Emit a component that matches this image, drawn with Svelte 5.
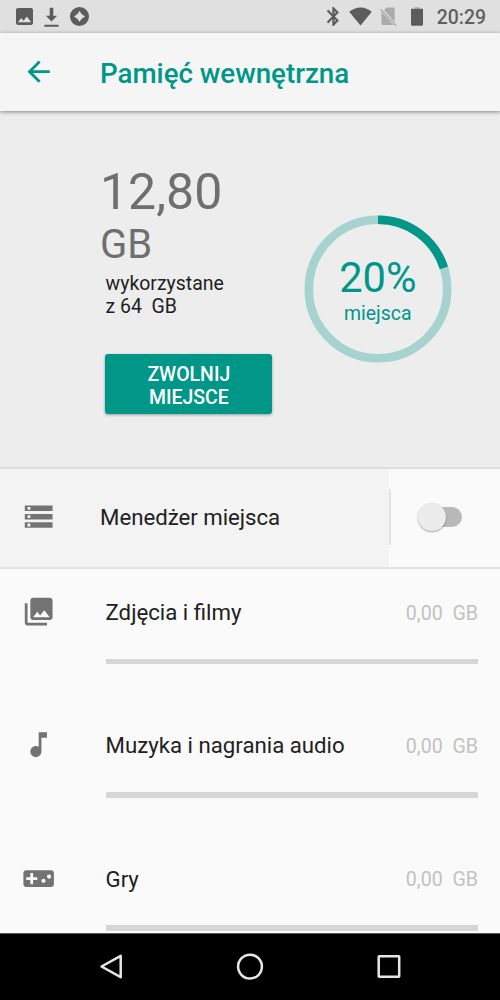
<script>
  const usedPercent = 20;
  const radius = 69.2;
  const circumference = 2 * Math.PI * radius;

  const categories = [
    {
      name: 'Zdjęcia i filmy',
      size: '0,00  GB',
      icon: 'M22 16V4c0-1.1-.9-2-2-2H8c-1.1 0-2 .9-2 2v12c0 1.1.9 2 2 2h12c1.1 0 2-.9 2-2zm-11-4l2.03 2.71L16 11l4 5H8l3-4zM2 6v14c0 1.1.9 2 2 2h14v-2H4V6H2z'
    },
    {
      name: 'Muzyka i nagrania audio',
      size: '0,00  GB',
      icon: 'M12 3v10.55c-.59-.34-1.27-.55-2-.55-2.21 0-4 1.79-4 4s1.79 4 4 4 4-1.79 4-4V7h4V3h-6z'
    },
    {
      name: 'Gry',
      size: '0,00  GB',
      icon: 'M21 6H3c-1.1 0-2 .9-2 2v8c0 1.1.9 2 2 2h18c1.1 0 2-.9 2-2V8c0-1.1-.9-2-2-2zm-10 7H8v3H6v-3H3v-2h3V8h2v3h3v2zm4.5 2c-.83 0-1.5-.67-1.5-1.5s.67-1.5 1.5-1.5 1.5.67 1.5 1.5-.67 1.5-1.5 1.5zm4-3c-.83 0-1.5-.67-1.5-1.5S18.67 9 19.5 9s1.5.67 1.5 1.5-.67 1.5-1.5 1.5z'
    }
  ];
</script>

<div class="screen">
  <div class="status">
    <div class="notifications">
      <svg width="17" height="17" viewBox="3 3 18 18"><path d="M21 19V5c0-1.100-.9-2-2-2H5c-1.100 0-2 .9-2 2v14c0 1.100.9 2 2 2h14c1.100 0 2-.9 2-2zM8.500 13.500l2.500 3.010L14.500 12l4.500 6H5l3.500-4.500z" /></svg>
      <svg width="15" height="20" viewBox="0 0 15 20"><path d="M5.700.8h3.600v8h3.900L7.500 14.500 1.800 8.800h3.900zM.3 17.800h14.300v1.900H.3z" /></svg>
      <svg width="19" height="19" viewBox="0 0 19 19"><path fill-rule="evenodd" d="M9.500 0a9.500 9.500 0 1 0 0 19a9.500 9.500 0 1 0 0-19zM9.500 4Q11.300 7.700 15 9.500Q11.300 11.300 9.500 15Q7.700 11.300 4 9.500Q7.700 7.700 9.500 4z" /></svg>
    </div>
    <div class="indicators">
      <svg width="12" height="19" viewBox="5 2 13 20" preserveAspectRatio="none"><path stroke="#5c5c5c" stroke-width=".4" d="M17.710 7.710L12 2h-1v7.590L6.410 5 5 6.410 10.590 12 5 17.590 6.410 19 11 14.410V22h1l5.710-5.710-4.300-4.290 4.300-4.290zM13 5.830l1.880 1.880L13 9.590V5.830zm1.880 10.460L13 18.170v-3.760l1.880 1.880z" /></svg>
      <svg class="wifi" width="23" height="19" viewBox="0 0 23 19"><path d="M11.500 18.500L.2 4.800C3.500 2 7.300.4 11.500.4s8 1.600 11.300 4.400z" /></svg>
      <svg class="sim" width="17" height="19" viewBox="0 0 17 19"><path d="M6.500.6H13c1 0 1.700.7 1.700 1.700v12.700L4.100 3.300zM1.500 5L13.500 17.900H3.200c-1 0-1.700-.7-1.700-1.700z" /><path d="M.4 2.200l15.500 16.200" fill="none" stroke="#aaa" stroke-width="1.500" /></svg>
      <svg class="battery" width="12" height="19" viewBox="0 0 12 19"><path d="M3.500 0h5v2h-5z" fill="#b5b5b5" /><path d="M0 1.800h12V17.600q0 1.100-1.100 1.100H1.100Q0 18.700 0 17.600z" /></svg>
      <span class="clock">20:29</span>
    </div>
  </div>

  <header>
    <svg class="icon back" viewBox="0 0 24 24"><path d="M20 11H7.830l5.590-5.590L12 4l-8 8 8 8 1.410-1.410L7.830 13H20v-2z" /></svg>
    <h1>Pamięć wewnętrzna</h1>
  </header>

  <section class="summary">
    <div class="usage">
      <div class="amount">12,80</div>
      <div class="unit">GB</div>
      <div class="detail">wykorzystane<br />z 64&nbsp; GB</div>
      <button>ZWOLNIJ<br />MIEJSCE</button>
    </div>
    <div class="donut">
      <svg width="148" height="148" viewBox="-74 -74 148 148">
        <circle r={radius} fill="none" stroke="#a6d3cf" stroke-width="8.6" />
        <circle r={radius} fill="none" stroke="#009688" stroke-width="8.6" transform="rotate(-90)" stroke-dasharray="{(circumference * usedPercent) / 100} {circumference}" />
      </svg>
      <div class="caption">
        <div class="percent">{usedPercent}%</div>
        <div class="word">miejsca</div>
      </div>
    </div>
  </section>

  <section class="manager">
    <div class="manager-main">
      <svg class="icon" viewBox="0 0 24 24"><path d="M2 20h20v-4H2v4zm2-3h2v2H4v-2zM2 4v4h20V4H2zm4 3H4V5h2v2zm-4 7h20v-4H2v4zm2-3h2v2H4v-2z" /></svg>
      <span>Menedżer miejsca</span>
    </div>
    <div class="manager-toggle">
      <div class="separator"></div>
      <div class="switch"><div class="thumb"></div></div>
    </div>
  </section>

  <main>
    {#each categories as category}
      <div class="row">
        <svg class="icon" viewBox="0 0 24 24"><path d={category.icon} /></svg>
        <div class="body">
          <div class="line">
            <span class="name">{category.name}</span>
            <span class="size">{category.size}</span>
          </div>
          <div class="bar"></div>
        </div>
      </div>
    {/each}
  </main>

  <nav>
    <svg width="26" height="28" viewBox="0 0 26 28"><path d="M3.500 13.500L22.700 2.800V24.200z" /></svg>
    <svg width="28" height="28" viewBox="0 0 28 28"><circle cx="14" cy="13.600" r="11.900" /></svg>
    <svg width="26" height="28" viewBox="0 0 26 28"><rect x="2.700" y="3.200" width="20.500" height="20.500" rx=".5" /></svg>
  </nav>
</div>

<style>
  :global(body) { margin: 0; }
  .screen {
    width: 500px;
    height: 1000px;
    overflow: hidden;
    display: flex;
    flex-direction: column;
    background: #fafafa;
    color: #212121;
    font-family: Roboto, sans-serif;
    font-size: 22.220px;
  }
  svg { display: block; flex: none; }
  .icon { width: 33.330px; height: 33.330px; fill: #737373; }

  .status {
    flex: none;
    height: 33px;
    box-sizing: border-box;
    padding: 0 14px 0 16.300px;
    display: flex;
    justify-content: space-between;
    align-items: center;
    background: #e0e0e0;
    fill: #5c5c5c;
  }
  .notifications, .indicators { display: flex; align-items: center; }
  .notifications { gap: 11px; }
  .wifi { margin-left: 10px; }
  .sim { margin-left: 7.500px; fill: #aaa; }
  .battery { margin-left: 14px; }
  .clock { margin-left: 14px; padding-top: 2px; font-size: 19.440px; font-weight: 500; line-height: 31px; color: #606060; }

  header {
    flex: none;
    height: 78px;
    display: flex;
    align-items: center;
    padding-left: 22.200px;
    gap: 44.500px;
    background: #f5f5f5;
    box-shadow: 0 1px 4px rgba(0, 0, 0, 0.45);
    z-index: 1;
  }
  .back { fill: #009688; }
  h1 { margin: 3px 0 0; font-size: 27.740px; font-weight: 500; line-height: 33px; letter-spacing: -0.030px; color: #009688; }

  .summary {
    flex: none;
    height: 357.500px;
    box-sizing: border-box;
    display: flex;
    padding-left: 100px;
    background: #ededed;
    border-bottom: 2px solid #dedede;
  }
  .usage { width: 203.800px; padding-top: 51.600px; }
  .amount { font-size: 50px; line-height: 58.500px; color: #6f6f6f; }
  .unit { font-size: 40px; line-height: 47px; color: #6f6f6f; }
  .detail { margin: 5.300px 0 0 5.600px; font-size: 19.440px; line-height: 22.800px; }
  button {
    display: block;
    margin: 35px 0 0 5.400px;
    width: 166.800px;
    height: 60.500px;
    padding: 5px 0 0;
    border: 0;
    border-radius: 3px;
    background: #009688;
    color: #fff;
    font: 500 19.440px/22.800px Roboto, sans-serif;
    box-shadow: 0 1px 3px rgba(0, 0, 0, 0.35);
  }
  .donut { display: grid; align-self: flex-start; margin-top: 103.500px; }
  .donut > * { grid-area: 1 / 1; }
  .caption { padding-top: 39.600px; text-align: center; color: #009688; }
  .percent { font-size: 41.670px; line-height: 48.800px; }
  .word { font-size: 19.440px; line-height: 22.800px; }

  .manager {
    flex: none;
    height: 100px;
    box-sizing: border-box;
    display: flex;
    border-bottom: 2px solid #e2e2e2;
  }
  .manager-main {
    width: 389.400px;
    display: flex;
    align-items: center;
    gap: 44.500px;
    padding: 0 0 1.500px 22.200px;
    box-sizing: border-box;
    background: #f3f3f3;
  }
  .manager-main span { letter-spacing: -0.030px; }
  .manager-toggle { flex: 1; display: flex; align-items: center; gap: 30px; padding-bottom: 1.500px; }
  .separator { width: 2px; height: 56px; background: #e3e3e3; }
  .switch { width: 41px; height: 20px; border-radius: 10px; background: #b9b9b9; display: flex; align-items: center; }
  .thumb {
    flex: none;
    width: 28px;
    height: 28px;
    margin-left: -3.500px;
    border-radius: 50%;
    background: #ececec;
    box-shadow: 0 1px 2px rgba(0, 0, 0, 0.35);
  }

  main { flex: 1; min-height: 0; overflow: hidden; }
  .row {
    height: 133.330px;
    box-sizing: border-box;
    display: flex;
    align-items: flex-start;
    gap: 50px;
    padding: 26.500px 22px 0 22.200px;
  }
  .body { flex: 1; }
  .line { display: flex; justify-content: space-between; align-items: center; height: 34px; }
  .size { padding-top: 2px; font-size: 19.600px; color: #c2c2c2; white-space: pre; }
  .bar { height: 5.600px; margin-top: 29.800px; background: #d6d6d6; }

  nav {
    flex: none;
    height: 67px;
    box-sizing: border-box;
    border-top: 1px solid #555;
    background: #000;
    display: flex;
    justify-content: space-between;
    align-items: center;
    padding: 0 98px;
  }
  nav svg { fill: none; stroke: #e6e6e6; stroke-width: 2.500; stroke-linejoin: round; }
</style>
